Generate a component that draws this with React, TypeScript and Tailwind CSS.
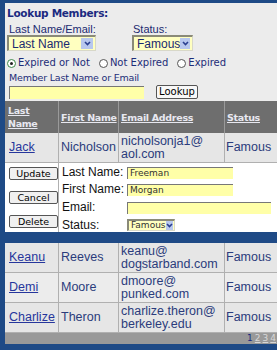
import React from "react";

const V = { fontFamily: '"DejaVu Sans", Verdana, sans-serif' };
const A = { fontFamily: '"Liberation Sans", Arial, sans-serif' };

function Chevron() {
  return (
    <svg width="7" height="5" viewBox="0 0 7 5">
      <path d="M1 1 L3.5 3.5 L6 1" stroke="#2a3f8f" strokeWidth="1.6" fill="none" />
    </svg>
  );
}

function Select({ label, w, small }: { label: string; w: string; small?: boolean }) {
  return (
    <div
      className={`${w} flex items-center justify-between bg-[#ffffc0] border-t-2 border-l-2 border-[#8a8a78] border-r border-b border-r-[#d8d8c8] border-b-[#d8d8c8] ${small ? "h-[12px] pl-[2px] pr-[1px]" : "h-[16px] pl-[3px] pr-[2px]"}`}
    >
      <span className={small ? "text-[9px] text-[#333]" : "text-[12px] text-[#1a2a70]"} style={small ? V : A}>
        {label}
      </span>
      <span className={`${small ? "w-[9px] h-[9px]" : "w-[12px] h-[11px]"} bg-[#b8c8ee] flex items-center justify-center`}>
        <Chevron />
      </span>
    </div>
  );
}

function Radio({ checked, label }: { checked?: boolean; label: string }) {
  return (
    <div className="flex items-center gap-[2px]">
      <span className={`w-[9px] h-[9px] rounded-full border ${checked ? "border-[#3f8a4a]" : "border-[#555]"} bg-white flex items-center justify-center`}>
        {checked && <span className="w-[3px] h-[3px] rounded-full bg-[#222]" />}
      </span>
      <span className="text-[10px] text-[#1d2c78] leading-none" style={V}>{label}</span>
    </div>
  );
}

function Btn({ label }: { label: string }) {
  return (
    <div className="w-[49px] h-[13px] border border-[#555] rounded-[2px] bg-[#f0f0f0] flex items-center justify-center text-[9.5px] text-black leading-none" style={V}>
      {label}
    </div>
  );
}

const C1 = "w-[54px] shrink-0";
const C2 = "w-[60px] shrink-0";
const C3 = "w-[106px] shrink-0";
const C4 = "flex-1";

function DataRow({ first, last, email1, email2, bg }: { first: string; last: string; email1: string; email2: string; bg: string }) {
  return (
    <div className={`flex h-[30px] ${bg} border-b border-[#b0b0b0] text-[12.5px] text-[#2b3c7c]`} style={A}>
      <div className={`${C1} flex items-center pl-[4px] border-r border-[#b0b0b0]`}>
        <span className="underline text-[#26369c]">{first}</span>
      </div>
      <div className={`${C2} flex items-center pl-[2px] border-r border-[#b0b0b0]`}>{last}</div>
      <div className={`${C3} flex flex-col justify-center pl-[2px] leading-[13px] border-r border-[#b0b0b0]`}>
        <span>{email1}</span>
        <span>{email2}</span>
      </div>
      <div className={`${C4} flex items-center pl-[1px]`}>Famous</div>
    </div>
  );
}

export default function App() {
  return (
    <div className="w-[277px] h-[350px] overflow-hidden bg-[#1e4a86] pt-[3px] pl-[5px]">
      {/* Lookup panel */}
      <div className="bg-[#ececec] h-[98px] pl-[2px] pt-[4px]">
        <div className="text-[10.5px] font-bold text-[#1b2a80] leading-[13px] tracking-[-0.3px]" style={V}>
          Lookup Members:
        </div>
        <div className="flex mt-[3px]">
          <div className="w-[125px]">
            <div className="text-[11px] text-[#1b2a70] leading-[12px] pl-[2px]" style={A}>Last Name/Email:</div>
            <Select label="Last Name" w="w-[89px]" />
          </div>
          <div>
            <div className="text-[11px] text-[#1b2a70] leading-[12px] pl-[1px]" style={A}>Status:</div>
            <Select label="Famous" w="w-[61px]" />
          </div>
        </div>
        <div className="flex items-center gap-[9px] mt-[7px]">
          <Radio checked label="Expired or Not" />
          <Radio label="Not Expired" />
          <Radio label="Expired" />
        </div>
        <div className="text-[9.5px] text-[#1d2c78] leading-[11px] mt-[4px] pl-[2px] tracking-[-0.2px]" style={V}>
          Member Last Name or Email
        </div>
        <div className="flex items-center mt-[2px] pl-[2px]">
          <div className="w-[135px] h-[13px] bg-[#ffffa8] border-t border-l border-[#777]" />
          <div className="ml-[12px] w-[42px] h-[14px] border border-[#555] rounded-[2px] bg-[#f8f8f8] flex items-center justify-center text-[10px] text-black leading-none" style={V}>
            Lookup
          </div>
        </div>
      </div>

      {/* Table */}
      <div className="bg-[#e6e6e6]">
        {/* Header */}
        <div className="flex h-[32px] bg-[#6e6e6e] text-[9.5px] font-bold text-[#e8e8f0] leading-[13px] tracking-[-0.3px]" style={V}>
          <div className={`${C1} pl-[3px] pt-[3px] border-r border-[#9a9a9a]`}>
            <span className="underline">Last</span>
            <br />
            <span className="underline">Name</span>
          </div>
          <div className={`${C2} flex items-center pl-[2px] border-r border-[#9a9a9a]`}>
            <span className="underline">First Name</span>
          </div>
          <div className={`${C3} flex items-center pl-[2px] border-r border-[#9a9a9a]`}>
            <span className="underline">Email Address</span>
          </div>
          <div className={`${C4} flex items-center pl-[2px]`}>
            <span className="underline">Status</span>
          </div>
        </div>
        <DataRow first="Jack" last="Nicholson" email1="nicholsonja1@" email2="aol.com" bg="bg-[#e6e6e6]" />

        {/* Edit row */}
        <div className="flex h-[69px] bg-white">
          <div className={`${C1} flex flex-col gap-[11px] pl-[4px] pt-[4px] border-r border-[#b0b0b0]`}>
            <Btn label="Update" />
            <Btn label="Cancel" />
            <Btn label="Delete" />
          </div>
          <div className="flex-1 pl-[3px] pt-[1px] text-[12px] text-[#111] leading-[15px]" style={A}>
            <div className="flex items-center h-[17px]">
              <span className="w-[65px]">Last Name:</span>
              <div className="w-[106px] h-[12px] bg-[#ffffa8] border-t border-l border-[#777] text-[9px] text-[#333] leading-[11px] pl-[2px]" style={V}>Freeman</div>
            </div>
            <div className="flex items-center h-[17px]">
              <span className="w-[65px]">First Name:</span>
              <div className="w-[106px] h-[12px] bg-[#ffffa8] border-t border-l border-[#777] text-[9px] text-[#333] leading-[11px] pl-[2px]" style={V}>Morgan</div>
            </div>
            <div className="flex items-center h-[19px]">
              <span className="w-[65px]">Email:</span>
              <div className="w-[144px] h-[12px] bg-[#ffffa8] border-t border-l border-[#777]" />
            </div>
            <div className="flex items-center h-[16px]">
              <span className="w-[65px]">Status:</span>
              <Select label="Famous" w="w-[48px]" small />
            </div>
          </div>
        </div>

        {/* Band */}
        <div className="h-[11px] bg-[#1f4a86]" />

        <DataRow first="Keanu" last="Reeves" email1="keanu@" email2="dogstarband.com" bg="bg-[#e6e6e6]" />
        <DataRow first="Demi" last="Moore" email1="dmoore@" email2="punked.com" bg="bg-[#ececec]" />
        <DataRow first="Charlize" last="Theron" email1="charlize.theron@" email2="berkeley.edu" bg="bg-[#e6e6e6]" />

        {/* Footer */}
        <div className="h-[11px] bg-[#999999] flex items-center justify-end pr-[1px] text-[9px] leading-none gap-[2px]" style={V}>
          <span className="text-[#1b2a80]">1</span>
          <span className="text-[#d8d8d8] underline">2</span>
          <span className="text-[#d8d8d8] underline">3</span>
          <span className="text-[#d8d8d8] underline">4</span>
        </div>
      </div>
    </div>
  );
}
